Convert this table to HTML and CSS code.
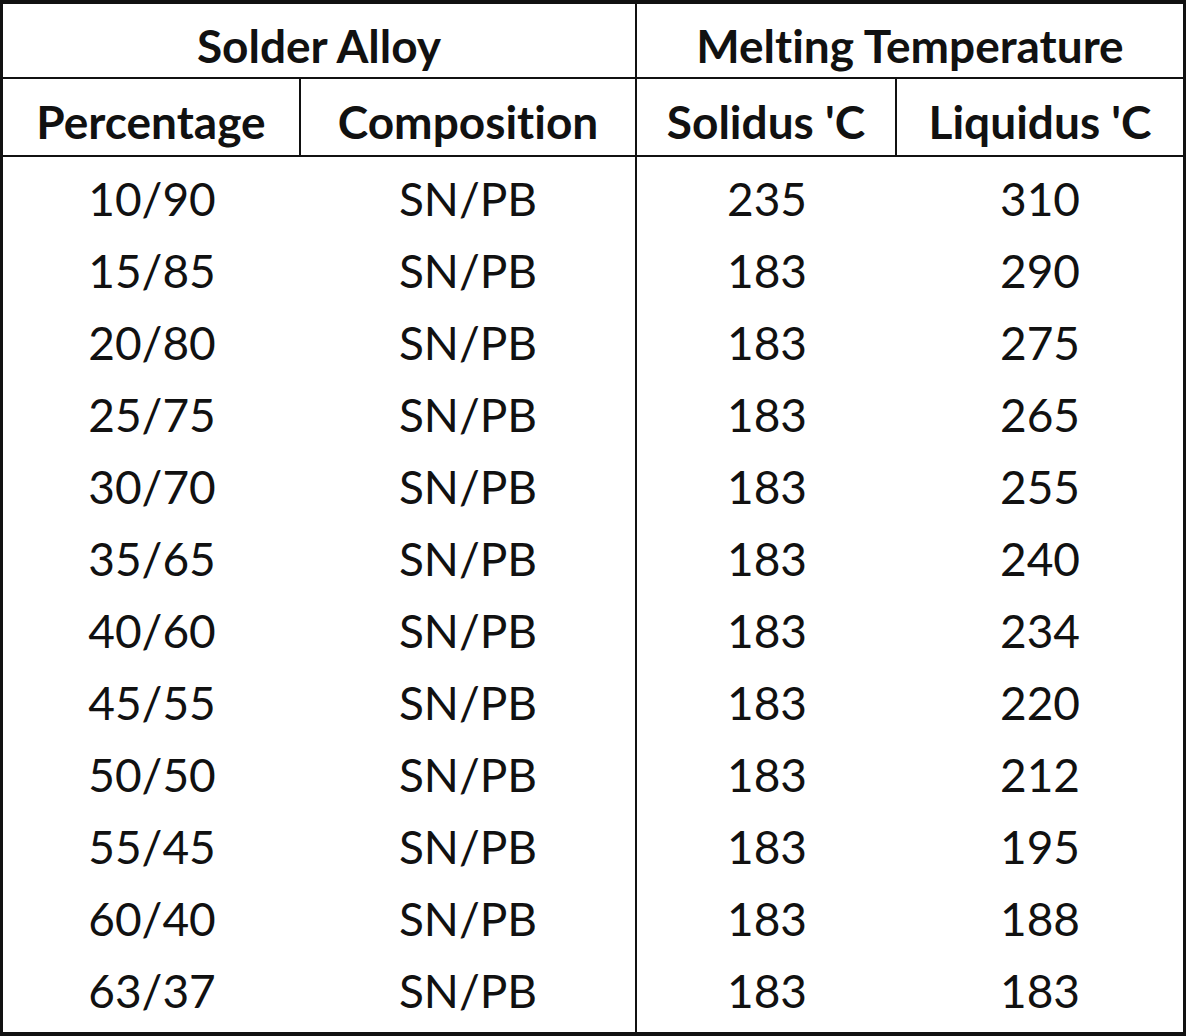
FILE: index.html
```html
<!DOCTYPE html>
<html lang="en">
<head>
<meta charset="utf-8">
<title>Solder Alloy Melting Temperatures</title>
<link rel="stylesheet" href="styles.css">
</head>
<body>
<div class="sheet">
  <div class="cell head span2 br bb">Solder Alloy</div>
  <div class="cell head span2 bb">Melting Temperature</div>
  <div class="cell head br bb">Percentage</div>
  <div class="cell head br bb">Composition</div>
  <div class="cell head br bb">Solidus 'C</div>
  <div class="cell head bb">Liquidus 'C</div>

  <div class="cell">10/90</div><div class="cell br">SN/PB</div><div class="cell">235</div><div class="cell">310</div>
  <div class="cell">15/85</div><div class="cell br">SN/PB</div><div class="cell">183</div><div class="cell">290</div>
  <div class="cell">20/80</div><div class="cell br">SN/PB</div><div class="cell">183</div><div class="cell">275</div>
  <div class="cell">25/75</div><div class="cell br">SN/PB</div><div class="cell">183</div><div class="cell">265</div>
  <div class="cell">30/70</div><div class="cell br">SN/PB</div><div class="cell">183</div><div class="cell">255</div>
  <div class="cell">35/65</div><div class="cell br">SN/PB</div><div class="cell">183</div><div class="cell">240</div>
  <div class="cell">40/60</div><div class="cell br">SN/PB</div><div class="cell">183</div><div class="cell">234</div>
  <div class="cell">45/55</div><div class="cell br">SN/PB</div><div class="cell">183</div><div class="cell">220</div>
  <div class="cell">50/50</div><div class="cell br">SN/PB</div><div class="cell">183</div><div class="cell">212</div>
  <div class="cell">55/45</div><div class="cell br">SN/PB</div><div class="cell">183</div><div class="cell">195</div>
  <div class="cell">60/40</div><div class="cell br">SN/PB</div><div class="cell">183</div><div class="cell">188</div>
  <div class="cell">63/37</div><div class="cell br">SN/PB</div><div class="cell">183</div><div class="cell">183</div>
</div>
</body>
</html>
```

FILE: styles.css
```css
html, body {
  margin: 0;
  padding: 0;
  background: #ffffff;
}

.sheet {
  box-sizing: border-box;
  width: 1186px;
  height: 1036px;
  border-style: solid;
  border-color: #111111;
  border-width: 4px 3px 4px 3px;
  display: grid;
  grid-template-columns: 298px 336px 260px 1fr;
  grid-template-rows: 75px 78px repeat(11, 72px) 1fr;
  font-family: "Lato", "Open Sans", sans-serif;
  font-size: 46px;
  font-variant-ligatures: none;
  color: #111111;
}

.cell {
  box-sizing: border-box;
  display: flex;
  align-items: flex-start;
  justify-content: center;
  padding-top: 14px;
  white-space: nowrap;
  line-height: 1.2;
}

.head {
  align-items: center;
  padding-top: 10px;
  font-weight: 700;
}

.span2 {
  grid-column: span 2;
}

.br {
  border-right: 2px solid #111111;
}

.bb {
  border-bottom: 2px solid #111111;
}
```
